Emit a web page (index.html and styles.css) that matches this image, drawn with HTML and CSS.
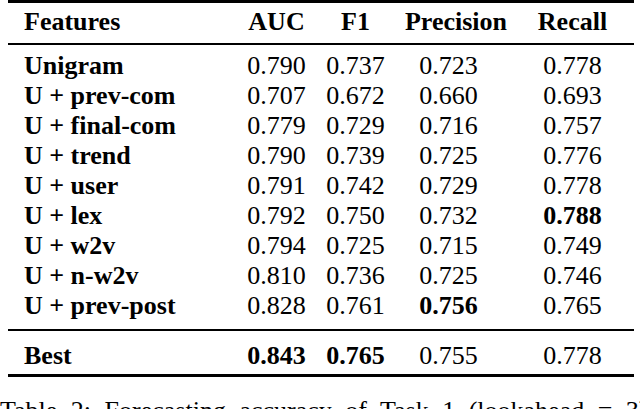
FILE: index.html
```html
<!DOCTYPE html>
<html lang="en">
<head>
    <meta charset="UTF-8">
    <meta name="viewport" content="width=device-width, initial-scale=1.0">
    <title>Table 2: Forecasting accuracy of Task 1</title>
    <link rel="stylesheet" href="styles.css">
</head>
<body>
    <table class="results">
        <colgroup>
            <col class="col-feat">
            <col class="col-auc">
            <col class="col-f1">
            <col class="col-prec">
            <col class="col-rec">
        </colgroup>
        <thead>
            <tr>
                <th class="feat">Features</th>
                <th>AUC</th>
                <th>F1</th>
                <th>Precision</th>
                <th class="rec">Recall</th>
            </tr>
        </thead>
        <tbody class="runs">
            <tr><td class="feat">Unigram</td><td>0.790</td><td>0.737</td><td class="prec">0.723</td><td class="rec">0.778</td></tr>
            <tr><td class="feat">U + prev-com</td><td>0.707</td><td>0.672</td><td class="prec">0.660</td><td class="rec">0.693</td></tr>
            <tr><td class="feat">U + final-com</td><td>0.779</td><td>0.729</td><td class="prec">0.716</td><td class="rec">0.757</td></tr>
            <tr><td class="feat">U + trend</td><td>0.790</td><td>0.739</td><td class="prec">0.725</td><td class="rec">0.776</td></tr>
            <tr><td class="feat">U + user</td><td>0.791</td><td>0.742</td><td class="prec">0.729</td><td class="rec">0.778</td></tr>
            <tr><td class="feat">U + lex</td><td>0.792</td><td>0.750</td><td class="prec">0.732</td><td class="rec"><b>0.788</b></td></tr>
            <tr><td class="feat">U + w2v</td><td>0.794</td><td>0.725</td><td class="prec">0.715</td><td class="rec">0.749</td></tr>
            <tr><td class="feat">U + n-w2v</td><td>0.810</td><td>0.736</td><td class="prec">0.725</td><td class="rec">0.746</td></tr>
            <tr><td class="feat">U + prev-post</td><td>0.828</td><td>0.761</td><td class="prec"><b>0.756</b></td><td class="rec">0.765</td></tr>
        </tbody>
        <tbody class="best">
            <tr><td class="feat">Best</td><td><b>0.843</b></td><td><b>0.765</b></td><td class="prec">0.755</td><td class="rec">0.778</td></tr>
        </tbody>
    </table>

    <p class="caption">Table 2: Forecasting accuracy of Task 1 (lookahead = 3), with the best feature set.</p>
</body>
</html>
```

FILE: styles.css
```css
body {
    margin: 0;
    font-family: "Liberation Serif", "DejaVu Serif", serif;
    font-size: 26px;
    color: #000;
    background: #fff;
    overflow: hidden;
}

/* Results table, booktabs look */
.results {
    margin-left: 8px;
    width: 626px;
    table-layout: fixed;
    border-collapse: separate;
    border-spacing: 0;
    border-top: 3px solid #000;
    border-bottom: 3px solid #000;
    font-family: "Liberation Serif", "DejaVu Serif", serif;
}

.col-feat { width: 220px; }
.col-auc  { width: 97px; }
.col-f1   { width: 61px; }
.col-prec { width: 140px; }
.col-rec  { width: 108px; }

th, td {
    padding: 0;
    line-height: 30px;
    text-align: center;
    white-space: nowrap;
}

th {
    font-weight: bold;
    padding-top: 4px;
    padding-bottom: 6px;
    border-bottom: 2px solid #000;
}

td.feat, th.feat {
    text-align: left;
    padding-left: 16px;
    font-weight: bold;
}

td.prec {
    padding-right: 15px;
}

.rec {
    padding-right: 15px;
}

.runs tr:first-child td {
    padding-top: 6px;
}

.runs tr:last-child td {
    padding-bottom: 8px;
}

.best td {
    border-top: 2px solid #000;
    padding-top: 10px;
    padding-bottom: 3px;
}

.caption {
    margin: 19px 0 0;
    width: 760px;
    line-height: 30px;
    white-space: nowrap;
    word-spacing: 7px;
}
```
